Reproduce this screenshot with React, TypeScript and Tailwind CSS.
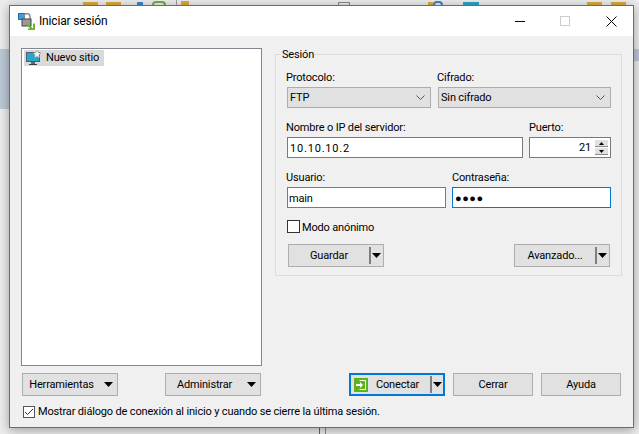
import React from 'react';

const font = { fontFamily: 'Roboto, "Noto Sans", sans-serif' };

const Caret: React.FC<{ className?: string }> = ({ className }) => (
    <svg width="9" height="5" viewBox="0 0 9 5" className={`shrink-0 ${className ?? ''}`}><path d="M0 0h9L4.5 5z" fill="#000" /></svg>
);

const Chevron: React.FC = () => (
    <svg width="9" height="5" viewBox="0 0 9 5" className="shrink-0"><path d="M0.5 0.5L4.5 4.5L8.5 0.5" fill="none" stroke="#555" strokeWidth="1" /></svg>
);

const Field: React.FC<{ label: string; value: React.ReactNode; className?: string; focused?: boolean }> = ({ label, value, className, focused }) => (
    <div className={className}>
        <div className={`h-[19px] text-[11px] leading-[21px] text-black ${focused ? '' : '-ml-px'}`}>{label}</div>
        <div className={`mt-px h-[21px] border bg-white pl-[2px] text-[11px] leading-[21px] text-black ${focused ? 'border-[#0078d7]' : 'border-[#7a7a7a]'}`}>{value}</div>
    </div>
);

const Select: React.FC<{ label: string; value: string; className?: string }> = ({ label, value, className }) => (
    <div className={className}>
        <div className="-ml-px h-[19px] text-[11px] leading-[21px] text-black">{label}</div>
        <div className="mt-px flex h-[21px] items-center justify-between border border-[#adadad] bg-[#e1e1e1] pl-[2px] pr-[5px] text-[11px] text-black">
            <span className="pt-[2px]">{value}</span>
            <Chevron />
        </div>
    </div>
);

const Btn: React.FC<{ children: React.ReactNode; className?: string }> = ({ children, className }) => (
    <div className={`flex h-[23px] items-center justify-center border border-[#adadad] bg-[#e1e1e1] text-[11px] text-black ${className ?? ''}`}>{children}</div>
);

const SplitBtn: React.FC<{ label: string }> = ({ label }) => (
    <Btn className="w-[96px] pr-[2px]">
        <span className="flex-1 pt-[2px] text-center">{label}</span>
        <span className="mr-px h-[17px] w-[2px] bg-[#7f7f7f]" />
        <Caret />
    </Btn>
);

const MenuBtn: React.FC<{ label: string }> = ({ label }) => (
    <Btn className="w-[96px] pr-[4px]">
        <span className="w-[77px] pt-[2px] text-center">{label}</span>
        <Caret className="ml-auto" />
    </Btn>
);

const AppIcon: React.FC = () => (
    <svg width="17" height="17" viewBox="0 0 17 17" className="shrink-0">
        <rect x="0.5" y="0.5" width="6" height="6" fill="#3f9ade" stroke="#1c6fb0" />
        <path d="M6 6V3.5a3 3 0 0 1 6 0V6" fill="none" stroke="#8c8c8c" strokeWidth="1.5" />
        <rect x="4" y="6" width="9" height="7" fill="#9a9a9a" stroke="#444" />
        <path d="M9 11l6 6M10 16.5h6v-6" fill="none" stroke="#6ab52d" strokeWidth="2" />
    </svg>
);

const SiteIcon: React.FC = () => (
    <svg width="16" height="16" viewBox="0 0 16 16" className="shrink-0">
        <rect x="0.5" y="2.5" width="13" height="9" fill="#28a7c9" stroke="#44606e" />
        <rect x="5" y="12" width="4" height="2" fill="#5a6b74" />
        <rect x="3" y="14" width="8" height="1" fill="#34434b" />
        <path d="M11 0l1.3 2.6 2.7.4-2 2 .5 2.8L11 6.5 8.5 7.8 9 5 7 3l2.7-.4z" fill="#f4f4f4" stroke="#8d8d8d" strokeWidth="0.5" />
    </svg>
);

const ConnectIcon: React.FC = () => (
    <svg width="14" height="14" viewBox="0 0 14 14" className="shrink-0">
        <rect width="14" height="14" fill="#5cb31a" />
        <path d="M5.5 2.5H11.5V11.5H5.5" fill="none" stroke="#fff" strokeWidth="1" />
        <path d="M2 6h4V4l3 3-3 3V8H2z" fill="#fff" />
    </svg>
);

export default function App() {
    return (
        <div style={font} className="relative h-[434px] w-[639px] overflow-hidden bg-[#ececec] tracking-[-0.16px]">
            {/* what shows of the app behind the dialog */}
            <div className="absolute left-[83px] top-[2px] h-[3px] w-[15px] bg-[#dcaa3c]" />
            <div className="absolute left-[106px] top-[2px] h-[3px] w-[15px] bg-[#dcaa3c]" />
            <div className="absolute left-[137px] top-[2px] h-[3px] w-[6px] bg-[#3d86c6]" />
            <div className="absolute left-[152px] top-[1px] h-[4px] w-[14px] rounded-t-full border-2 border-b-0 border-[#6cb04a]" />
            <div className="absolute left-[176px] top-0 h-[5px] w-px bg-[#a0a0a0]" />
            <div className="absolute left-[181px] top-[1px] h-[4px] w-[8px] bg-[#dcaa3c]" />
            <div className="absolute left-[338px] top-[2px] h-[3px] w-[12px] border border-b-0 border-[#8a8a8a]" />
            <div className="absolute left-[428px] top-[2px] h-[3px] w-[5px] bg-[#dcaa3c]" />
            <div className="absolute left-[433px] top-[1px] h-[4px] w-[10px] rounded-t-full border-2 border-b-0 border-[#3d86c6]" />
            <div className="absolute left-[463px] top-[2px] h-[3px] w-[16px] bg-[#2ba6c4]" />
            <div className="absolute left-[587px] top-[2px] h-[3px] w-[15px] bg-[#dcaa3c]" />
            <div className="absolute left-[611px] top-[2px] h-[3px] w-[15px] bg-[#dcaa3c]" />
            <div className="absolute left-0 top-[49px] h-[60px] w-[9px] bg-[#bcc8d6]" />
            <div className="absolute left-[634px] top-[49px] h-[12px] w-[5px] bg-[#bcc8d6]" />
            <div className="absolute bottom-0 left-[319px] h-[6px] w-px bg-[#666666]" />
            <div className="absolute bottom-0 left-[325px] h-[6px] w-px bg-[#888888]" />

            <div className="absolute left-[9px] top-[5px] flex h-[423px] w-[625px] flex-col border border-[#1883d7] bg-[#f0f0f0] shadow-[0_2px_10px_rgba(0,0,0,0.35)]">
                <div className="flex h-[30px] shrink-0 items-center bg-white pl-[8px]">
                    <AppIcon />
                    <span className="ml-[4px] text-xs text-black">Iniciar sesión</span>
                    <div className="ml-auto flex items-center pr-[16px]">
                        <span className="h-px w-[10px] bg-black" />
                        <span className="ml-[35px] h-[10px] w-[10px] border border-[#cccccc]" />
                        <svg width="11" height="11" viewBox="0 0 11 11" className="ml-[36px]"><path d="M0.5 0.5L10.5 10.5M10.5 0.5L0.5 10.5" stroke="#000" strokeWidth="1" /></svg>
                    </div>
                </div>

                <div className="flex min-h-0 flex-1 pl-[11px] pr-[11px] pt-[12px]">
                    <div className="flex w-[241px] shrink-0 flex-col">
                        <div className="h-[318px] border border-[#828790] bg-white pl-[2px] pt-px">
                            <div className="flex h-[16px] w-[80px] items-center gap-[4px] whitespace-nowrap bg-[#d9d9d9] pl-[2px] text-[11px] text-black">
                                <SiteIcon />
                                <span>Nuevo sitio</span>
                            </div>
                        </div>
                        <div className="mt-[7px] flex justify-between px-px">
                            <MenuBtn label="Herramientas" />
                            <MenuBtn label="Administrar" />
                        </div>
                    </div>

                    <div className="ml-[13px] flex flex-1 flex-col">
                        <div className="relative mt-[6px] h-[222px] w-[347px] border border-[#dcdcdc] pl-[11px] pt-[12px]">
                            <span className="absolute -top-[9px] left-[5px] bg-[#f0f0f0] px-px text-[11px] leading-[18px] text-black">Sesión</span>
                            <div className="flex gap-[7px]">
                                <Select label="Protocolo:" value="FTP" className="w-[144px]" />
                                <Select label="Cifrado:" value="Sin cifrado" className="w-[173px]" />
                            </div>
                            <div className="mt-[9px] flex gap-[6px]">
                                <Field label="Nombre o IP del servidor:" value={<span className="tracking-[0.8px]">10.10.10.2</span>} className="w-[236px]" />
                                <div className="w-[82px]">
                                    <div className="h-[19px] text-[11px] leading-[21px] text-black">Puerto:</div>
                                    <div className="mt-px flex h-[21px] items-center justify-end border border-[#7a7a7a] bg-white pr-[2px] text-[11px] text-black">
                                        <span className="mr-[4px] pt-[2px]">21</span>
                                        <div className="flex w-[13px] flex-col gap-px">
                                            <div className="flex h-[7px] items-center justify-center border-b border-[#8a8a8a] bg-[#e1e1e1]"><svg width="5" height="3" viewBox="0 0 5 3"><path d="M2.5 0L5 3H0z" fill="#000" /></svg></div>
                                            <div className="flex h-[7px] items-center justify-center border-b border-[#8a8a8a] bg-[#e1e1e1]"><svg width="5" height="3" viewBox="0 0 5 3"><path d="M0 0h5L2.5 3z" fill="#000" /></svg></div>
                                        </div>
                                    </div>
                                </div>
                            </div>
                            <div className="mt-[9px] flex gap-[6px]">
                                <Field label="Usuario:" value={<span className="-ml-px">main</span>} className="w-[159px]" />
                                <Field label="Contraseña:" value={<span className="tracking-[0.5px]">●●●●</span>} className="w-[159px]" focused />
                            </div>
                            <div className="mt-[11px] flex items-center gap-[2px] text-[11px] leading-[13px] text-black">
                                <span className="h-[13px] w-[13px] border border-[#333333] bg-white" />
                                <span className="pt-[2px]">Modo anónimo</span>
                            </div>
                            <div className="mt-[10px] flex w-[323px] justify-between pl-px">
                                <SplitBtn label="Guardar" />
                                <SplitBtn label="Avanzado..." />
                            </div>
                        </div>

                        <div className="mt-[97px] flex justify-end gap-[8px] pr-px">
                            <div className="flex h-[23px] w-[96px] items-center border-2 border-[#0078d7] bg-[#e1e1e1] pl-[3px] pr-px text-[11px] text-black">
                                <ConnectIcon />
                                <span className="ml-[8px] pt-[2px]">Conectar</span>
                                <span className="ml-auto mr-px h-[17px] w-[2px] bg-[#7f7f7f]" />
                                <Caret />
                            </div>
                            <Btn className="w-[80px]"><span className="pt-[2px]">Cerrar</span></Btn>
                            <Btn className="w-[80px]"><span className="pt-[2px]">Ayuda</span></Btn>
                        </div>
                    </div>
                </div>

                <div className="mb-[9px] flex h-[13px] items-center gap-[3px] pl-[13px] text-[11px] leading-[13px] text-black">
                    <span className="flex h-[12px] w-[12px] items-center justify-center border border-[#555555] bg-white">
                        <svg width="10" height="8" viewBox="0 0 10 8"><path d="M1 4L3.5 6.5L9 1" fill="none" stroke="#333" strokeWidth="1" /></svg>
                    </span>
                    <span>Mostrar diálogo de conexión al inicio y cuando se cierre la última sesión.</span>
                </div>
            </div>
        </div>
    );
}
